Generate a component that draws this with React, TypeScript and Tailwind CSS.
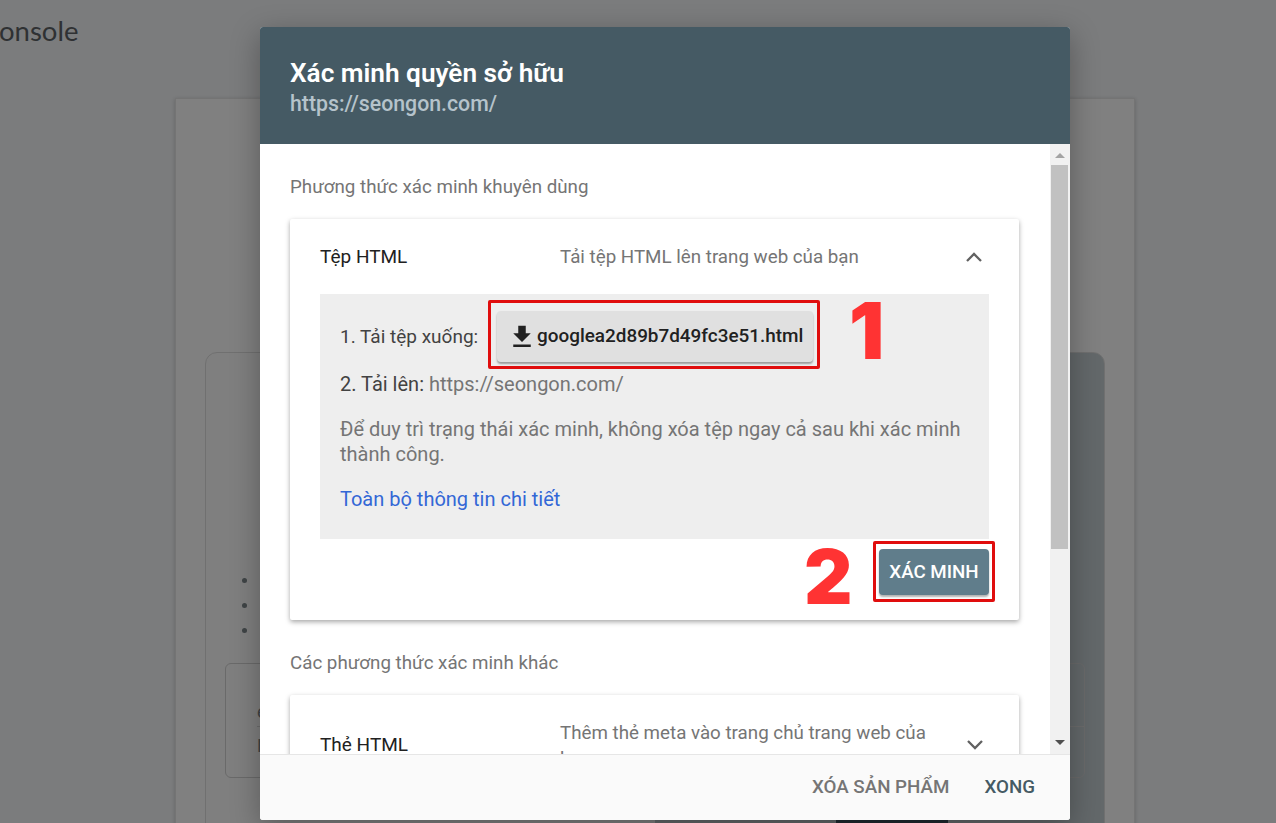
const Chevron = ({ up }: { up?: boolean }) => (
  <svg width="24" height="24" viewBox="0 0 24 24" className="text-[#616161]">
    <polyline
      points={up ? '5,16 12,9 19,16' : '5,8 12,15 19,8'}
      fill="none"
      stroke="currentColor"
      strokeWidth="2.3"
    />
  </svg>
);

const BackgroundPage = () => (
  <div className="h-[823px] overflow-hidden bg-[#7b7c7d]">
    <div className="h-[98px] pt-[13px] -ml-[1px] font-['Lato',sans-serif] text-[27.5px] leading-9 text-[#2f3133]">onsole</div>
    <div className="ml-[175px] w-[960px] h-[800px] bg-[#808080] border border-[#747474] shadow-[0_1px_4px_rgba(0,0,0,0.2)] px-[29px] pt-[253px]">
      <div className="h-[600px] rounded-[12px] border border-[#707070] bg-[linear-gradient(90deg,#7f7f7f_50%,#63686a_50%)] px-[19px] pt-[225px]">
        <ul className="pl-[17px] space-y-[20px]">
          <li className="h-[5px] w-[5px] rounded-full bg-[#3f4446]"></li>
          <li className="h-[5px] w-[5px] rounded-full bg-[#3f4446]"></li>
          <li className="h-[5px] w-[5px] rounded-full bg-[#3f4446]"></li>
        </ul>
        <div className="mt-[30px] h-[115px] rounded-[6px] border border-[#6a6a6a] pl-[31px] pt-[35px] text-[18px] leading-[26px] text-[#3f4446]">
          <div className="border-b border-[#6c6c6c] h-[28px]">e</div>
          <div className="pt-[6px]">N</div>
        </div>
        <div className="mt-[13px] ml-[611px] w-[112px] h-[40px] bg-[#1f2a30]"></div>
      </div>
    </div>
  </div>
);

const App = () => {
  return (
    <div className="relative h-[823px] overflow-hidden font-['Roboto',sans-serif]">
      <BackgroundPage />

      <div className="absolute inset-0 pl-[260px] pt-[27px]">
        <div className="w-[810px] h-[793px] flex flex-col rounded-[3px] overflow-hidden bg-white shadow-[0_8px_30px_rgba(0,0,0,0.3)]">
          <div className="h-[117px] shrink-0 bg-[#455a64] px-[30px] pt-[30px]">
            <h1 className="text-[26.2px] leading-[32px] font-semibold text-white">Xác minh quyền sở hữu</h1>
            <p className="mt-[2px] text-[21.3px] leading-[26px] font-medium text-[#b5c3cb]">https://seongon.com/</p>
          </div>

          <div className="flex h-[610px] shrink-0">
            <div className="flex-1 overflow-hidden pl-[30px] pr-[31px] pt-[30px]">
              <h2 className="text-[18.75px] leading-[26px] text-[#757575]">Phương thức xác minh khuyên dùng</h2>

              <div className="mt-[19px] h-[401px] bg-white rounded-[2px] shadow-[0_2px_5px_rgba(0,0,0,0.35)]">
                <div className="h-[75px] flex items-center px-[30px] pt-[1px]">
                  <span className="w-[240px] text-[19px] text-[#212121]">Tệp HTML</span>
                  <span className="flex-1 text-[18.75px] text-[#757575]">Tải tệp HTML lên trang web của bạn</span>
                  <span className="mr-[3px]"><Chevron up /></span>
                </div>

                <div className="mx-[30px] h-[245px] bg-[#eeeeee] px-[20px] pt-[17px] text-[20px] text-[#757575]">
                  <div className="flex items-center gap-[19px]">
                    <span className="pt-[1px] text-[19px] text-[#424242]">1. Tải tệp xuống:</span>
                    <div className="relative">
                      <button className="h-[51px] w-[316px] flex items-center justify-center rounded-[4px] bg-[#e0e0e0] text-[18.9px] font-medium text-[#212121] shadow-[0_2px_2px_rgba(0,0,0,0.35)]">
                        <svg width="30" height="30" viewBox="0 0 24 24" fill="currentColor">
                          <path d="M19 9h-4V3H9v6H5l7 7 7-7zM5 18v2h14v-2H5z" />
                        </svg>
                        googlea2d89b7d49fc3e51.html
                      </button>
                      <div className="absolute left-[-9px] right-[-7px] top-[-11px] bottom-[-7px] border-[3px] border-[#e00d0d] rounded-[2px]"></div>
                    </div>
                  </div>
                  <p className="mt-[9px] leading-[26px]"><span className="text-[#424242]">2. Tải lên:</span> https://seongon.com/</p>
                  <p className="mt-[20px] leading-[25px]">Để duy trì trạng thái xác minh, không xóa tệp ngay cả sau khi xác minh thành công.</p>
                  <a className="block mt-[19px] leading-[26px] text-[#3367d6]">Toàn bộ thông tin chi tiết</a>
                </div>

                <div className="flex justify-end pr-[30px] pt-[10px]">
                  <div className="relative">
                    <button className="h-[46px] w-[110px] rounded-[4px] bg-[#607d8b] text-[18.75px] font-medium text-white shadow-[0_2px_2px_rgba(0,0,0,0.3)]">XÁC MINH</button>
                    <div className="absolute left-[-6px] right-[-6px] top-[-8px] bottom-[-7px] border-[3px] border-[#e00d0d] rounded-[2px]"></div>
                  </div>
                </div>
              </div>

              <h2 className="mt-[30px] text-[18.75px] leading-[26px] text-[#757575]">Các phương thức xác minh khác</h2>

              <div className="mt-[19px] h-[120px] bg-white rounded-[2px] shadow-[0_2px_5px_rgba(0,0,0,0.35)] flex items-start px-[30px] pt-[25px]">
                <span className="w-[240px] pt-[12px] text-[19px] leading-[26px] text-[#212121]">Thẻ HTML</span>
                <span className="flex-1 text-[18.75px] leading-[26px] text-[#757575]">Thêm thẻ meta vào trang chủ trang web của bạn</span>
                <span className="ml-[30px] pt-[13px] mr-[2px]"><Chevron /></span>
              </div>
            </div>

            <div className="w-[20px] shrink-0 bg-[#f1f1f1] pl-[1px] pr-[2px] flex flex-col">
              <div className="h-[21px] flex items-center justify-center pt-[1px]">
                <div className="border-x-[5px] border-x-transparent border-b-[5px] border-b-[#a3a3a3]"></div>
              </div>
              <div className="h-[384px] bg-[#c1c1c1]"></div>
              <div className="flex-1"></div>
              <div className="h-[24px] flex items-start justify-center pt-[10px]">
                <div className="border-x-[5px] border-x-transparent border-t-[5px] border-t-[#505050]"></div>
              </div>
            </div>
          </div>

          <div className="flex-1 bg-[#fafafa] border-t border-[#e6e6e6] flex items-center justify-end gap-[35px] pr-[35px] text-[18.75px] font-medium">
            <button className="text-[#757575]">XÓA SẢN PHẨM</button>
            <button className="text-[#455a64]">XONG</button>
          </div>
        </div>
      </div>

      {/* số chú thích màu đỏ */}
      <span className="absolute left-[849px] top-[286px] font-['Inter',sans-serif] font-black text-[78px] leading-[90px] text-[#ff3333]">1</span>
      <span className="absolute left-[804px] top-[532px] font-['Inter',sans-serif] font-black text-[75px] leading-[90px] text-[#ff3333]">2</span>
    </div>
  );
};

export default App;
